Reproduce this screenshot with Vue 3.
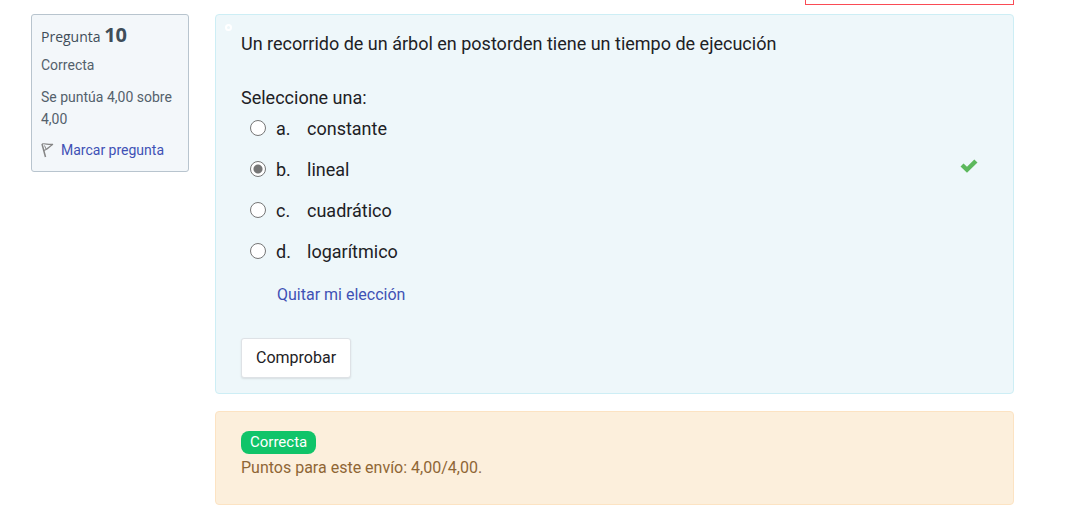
<script setup>
import { ref } from 'vue'

const options = [
  { key: 'a', text: 'constante' },
  { key: 'b', text: 'lineal' },
  { key: 'c', text: 'cuadrático' },
  { key: 'd', text: 'logarítmico' },
]
const answer = ref('b')
</script>

<template>
  <main class="page">
    <div class="timer"></div>
    <div class="question">
      <aside class="info">
        <h3 class="number">Pregunta <strong>10</strong></h3>
        <p class="state">Correcta</p>
        <p class="grade">Se puntúa 4,00 sobre 4,00</p>
        <a href="#" class="flag">
          <svg width="13" height="16" viewBox="0 0 13 16" fill="none" stroke="#858585" aria-hidden="true">
            <path d="M1 2 L4.5 15" stroke-width="1.5" />
            <path d="M1 2 C4 1 7 3 12 2.3 C9 4 7.5 6 5 7.5 L3 8.5" stroke-width="1.2" />
            <path d="M3.5 3.5 L5 7" stroke-width="1" />
          </svg>
          <span>Marcar pregunta</span>
        </a>
      </aside>

      <div class="content">
        <form class="formulation" @submit.prevent>
          <span class="dot"></span>
          <p class="text">Un recorrido de un árbol en postorden tiene un tiempo de ejecución</p>
          <fieldset class="answers">
            <legend>Seleccione una:</legend>
            <div v-for="o in options" :key="o.key" class="option">
              <input :id="'option-' + o.key" v-model="answer" type="radio" name="answer" :value="o.key" />
              <label :for="'option-' + o.key"><span class="letter">{{ o.key }}.</span>{{ o.text }}</label>
              <svg v-if="o.key === 'b'" class="check" width="18" height="14" viewBox="0 0 18 14" role="img" aria-label="Correcta">
                <path d="M0.5 7.5 L3.5 4.5 L7 7.8 L14.3 0.5 L17.5 3.5 L7 13.7 Z" fill="#5cb85c" />
              </svg>
            </div>
          </fieldset>
          <a href="#" class="clear" @click.prevent="answer = ''">Quitar mi elección</a>
          <button type="submit" class="submit">Comprobar</button>
        </form>

        <section class="outcome">
          <span class="badge">Correcta</span>
          <p>Puntos para este envío: 4,00/4,00.</p>
        </section>
      </div>
    </div>
  </main>
</template>

<style>
body {
  background: #fff;
}
</style>

<style scoped>
.page {
  box-sizing: border-box;
  padding: 0 71px 21px 31px;
  font-family: Roboto, "Liberation Sans", sans-serif;
  font-size: 16px;
  color: #1d2125;
}
.timer {
  box-sizing: border-box;
  width: 209px;
  height: 5px;
  margin: 0 0 9px auto;
  border: 1px solid #fa4b55;
  border-top: 0;
}
.question {
  display: flex;
  align-items: flex-start;
  gap: 26px;
}
.info {
  box-sizing: border-box;
  flex: 0 0 158px;
  padding: 8px 9px 10px;
  border: 1px solid #b8c4ce;
  border-radius: 3px;
  background: #f3f7fa;
  color: #54616c;
  font-size: 14px;
  line-height: 22px;
}
.number {
  margin: 0 0 6px;
  font: 14px/23px "Open Sans", sans-serif;
  color: #3f4d59;
}
.number strong {
  font-size: 20px;
  line-height: 23px;
}
.state {
  margin: 0 0 10px;
}
.grade {
  margin: 0 0 9px;
}
a {
  color: #3f51b5;
  text-decoration: none;
}
.flag {
  display: flex;
  align-items: center;
  gap: 7px;
}
.content {
  flex: 1;
  min-width: 0;
}
.formulation {
  position: relative;
  padding: 15px 25px;
  border: 1px solid #cdeef5;
  border-radius: 4px;
  background: #eef7fa;
}
.dot {
  position: absolute;
  top: 9px;
  left: 9px;
  box-sizing: border-box;
  width: 7px;
  height: 7px;
  border: 2px solid #fff;
  border-radius: 50%;
}
.text {
  margin: 0 0 27px;
  font-size: 18px;
  line-height: 27px;
}
.answers {
  margin: 0;
  padding: 0;
  border: 0;
  font-size: 18px;
  line-height: 27px;
}
legend {
  padding: 0;
}
.option {
  display: flex;
  align-items: center;
  height: 27px;
  margin: 4px 0 14px;
  padding: 0 10px 0 9px;
}
.option + .option {
  margin-top: 0;
}
.option input {
  appearance: none;
  box-sizing: border-box;
  width: 16px;
  height: 16px;
  margin: 0 10px 2px 0;
  border: 1px solid #767676;
  border-radius: 50%;
  background: #fff;
}
.option input:checked {
  background: radial-gradient(circle, #767676 4px, #fff 5px);
}
.letter {
  display: inline-block;
  width: 31px;
}
.check {
  margin: 0 0 8px auto;
}
.clear {
  display: block;
  width: fit-content;
  margin: 4px 0 31px 36px;
  line-height: 24px;
}
.submit {
  display: block;
  height: 40px;
  padding: 0 14px 2px;
  border: 1px solid #dee2e6;
  border-radius: 3px;
  background: #fff;
  box-shadow: 0 1px 2px rgba(0, 0, 0, 0.1);
  color: #1d2125;
  font: inherit;
}
.outcome {
  margin-top: 17px;
  padding: 19px 25px 24px;
  border: 1px solid #fce3c3;
  border-radius: 4px;
  background: #fcefdc;
  color: #8f6635;
}
.badge {
  display: block;
  width: fit-content;
  padding: 0 9px;
  border-radius: 8px;
  background: #10c469;
  color: #fff;
  font-size: 15px;
  line-height: 23px;
}
.outcome p {
  margin: 2px 0 0;
  line-height: 24px;
}
</style>
